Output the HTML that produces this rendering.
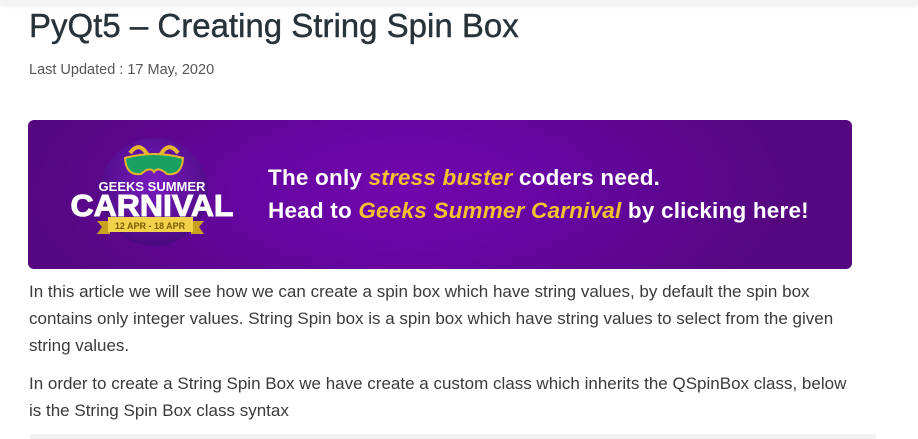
<!DOCTYPE html>
<html><head><meta charset="utf-8"><style>
html,body{margin:0;padding:0;background:#fff;width:918px;height:439px;overflow:hidden;position:relative}
.topbar{position:absolute;left:0;top:0;width:918px;height:5px;background:#f3f3f4;box-shadow:0 1px 4px rgba(0,0,0,.08)}
h1{position:absolute;left:29px;top:6px;margin:0;font:33px/40px "Liberation Sans",sans-serif;color:#273239;letter-spacing:0px;-webkit-text-stroke:0.4px #273239}
.date{position:absolute;left:29px;top:61px;font:14.5px/18px "Liberation Sans",sans-serif;color:#555}
.banner{position:absolute;left:28px;top:120px;width:824px;height:149px;border-radius:6px;overflow:hidden;
background:radial-gradient(ellipse 380px 160px at 380px 70px,#7207ad 0%,#6506a0 45%,#55077f 100%)}
.t{position:absolute;left:240px;font:bold 22.5px/26px "Liberation Sans",sans-serif;color:#fff;white-space:nowrap;letter-spacing:0.2px}
.t i{color:#f4c12f}
p{position:absolute;left:29px;margin:0;font:17px/27px "Liberation Sans",sans-serif;color:#3a3a3a;white-space:nowrap}
.bot{position:absolute;left:30px;top:434px;width:846px;height:5px;background:#f3f3f4}
</style></head><body>
<div class="topbar"></div>
<h1>PyQt5 – Creating String Spin Box</h1>
<div class="date">Last Updated : 17 May, 2020</div>
<div class="banner">
<svg width="230" height="149" style="position:absolute;left:0;top:0">
<defs><radialGradient id="c" cx="50%" cy="40%" r="60%"><stop offset="0" stop-color="#7a1cc0"/><stop offset="1" stop-color="#4a0a80"/></radialGradient></defs>
<circle cx="126" cy="72" r="54" fill="url(#c)"/>
<path d="M102 33 Q112 20 120 36 M150 33 Q140 20 132 36" stroke="#e6b62c" stroke-width="4" fill="none"/>
<path d="M97 38 Q126 30 155 38 Q154 56 139 54 Q130 46 126 52 Q122 46 113 54 Q98 56 97 38Z" fill="#1aa060" stroke="#e6b62c" stroke-width="2"/>
<text x="124" y="71" text-anchor="middle" font-family="Liberation Sans" font-weight="bold" font-size="13" fill="#fff">GEEKS SUMMER</text>
<text x="124" y="96" text-anchor="middle" font-family="Liberation Sans" font-weight="900" font-size="31" fill="#fff" stroke="#fff" stroke-width="1" textLength="163" lengthAdjust="spacingAndGlyphs">CARNIVAL</text>
<path d="M69 101 L82 101 L82 114 L69 114 L74 107Z M176 101 L163 101 L163 114 L176 114 L171 107Z" fill="#c9a020"/>
<rect x="80" y="97" width="85" height="15" fill="#f2d24a"/>
<text x="122" y="109" text-anchor="middle" font-family="Liberation Sans" font-weight="bold" font-size="9" fill="#7a5a00">12 APR - 18 APR</text>
</svg>
<div class="t" style="top:45px">The only <i>stress buster</i> coders need.</div>
<div class="t" style="top:78px">Head to <i>Geeks Summer Carnival</i> by clicking here!</div>
</div>
<p style="top:278px">In this article we will see how we can create a spin box which have string values, by default the spin box</p>
<p style="top:305px">contains only integer values. String Spin box is a spin box which have string values to select from the given</p>
<p style="top:332px">string values.</p>
<p style="top:370px">In order to create a String Spin Box we have create a custom class which inherits the QSpinBox class, below</p>
<p style="top:397px">is the String Spin Box class syntax</p>
<div class="bot"></div>
</body></html>
